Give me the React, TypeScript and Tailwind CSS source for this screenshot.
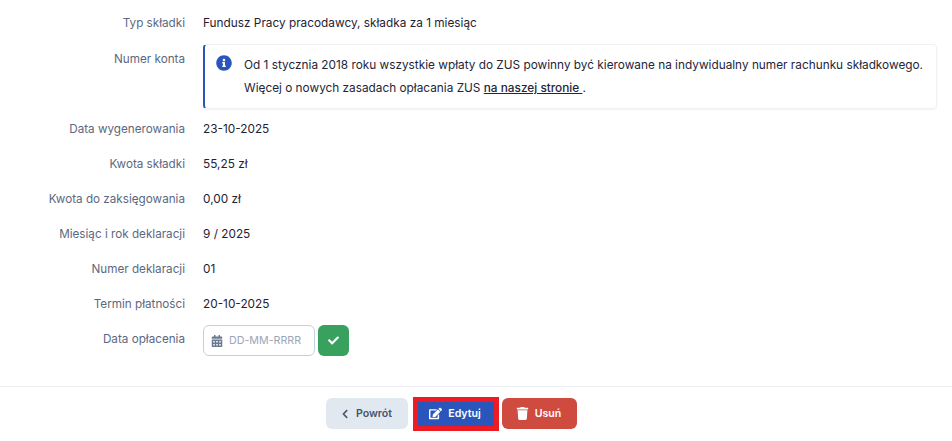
import { FaInfoCircle, FaCalendarAlt, FaCheck, FaChevronLeft, FaEdit, FaTrash } from "react-icons/fa";

const Row = ({ label, value }: { label: string; value: string }) => (
  <div className="flex h-[35px] items-center">
    <div className="w-[185px] text-right text-[#5c6880] text-[11.7px]">{label}</div>
    <div className="ml-[18px] text-[#1f2233]">{value}</div>
  </div>
);

export default function App() {
  return (
    <div className="w-[952px] h-[441px] bg-white overflow-hidden text-[11.82px] leading-[18px] font-['Inter',sans-serif] flex flex-col">
      <div className="pt-[5px] flex-1">
        <Row label="Typ składki" value="Fundusz Pracy pracodawcy, składka za 1 miesiąc" />
        <div className="flex pt-[4px] h-[71px]">
          <div className="w-[185px] text-right text-[#5c6880] text-[11.7px] pt-[6px]">Numer konta</div>
          <div className="ml-[18px] w-[734px] h-[65px] rounded-[4px] border border-[#f0f1f4] border-l-2 border-l-[#2a56bc] shadow-[0_1px_2px_rgba(0,0,0,0.05)] flex pl-[11px] pt-[9px]">
            <FaInfoCircle className="text-[#2a56bc] text-[16px] mt-[1px] shrink-0" />
            <div className="ml-[12px] text-[#23263a] leading-[23px]">
              <div>Od 1 stycznia 2018 roku wszystkie wpłaty do ZUS powinny być kierowane na indywidualny numer rachunku składkowego.</div>
              <div>Więcej o nowych zasadach opłacania ZUS <span className="underline font-medium">na naszej stronie </span> .</div>
            </div>
          </div>
        </div>
        <Row label="Data wygenerowania" value="23-10-2025" />
        <Row label="Kwota składki" value="55,25 zł" />
        <Row label="Kwota do zaksięgowania" value="0,00 zł" />
        <Row label="Miesiąc i rok deklaracji" value="9 / 2025" />
        <Row label="Numer deklaracji" value="01" />
        <Row label="Termin płatności" value="20-10-2025" />
        <div className="flex h-[35px] items-center">
          <div className="w-[185px] text-right text-[#5c6880] text-[11.7px]">Data opłacenia</div>
          <div className="ml-[18px] h-full pt-[4px] flex items-start gap-[3px]">
            <div className="w-[112px] h-[31px] rounded-[6px] border border-[#c5d0dc] flex items-center pl-[7px] gap-[6px]">
              <FaCalendarAlt className="text-[#6b7a90] text-[12px]" />
              <span className="text-[#9aa6b8] text-[10.7px]">DD-MM-RRRR</span>
            </div>
            <div className="w-[31px] h-[31px] rounded-[6px] bg-[#38a15e] flex items-center justify-center">
              <FaCheck className="text-white text-[11px]" />
            </div>
          </div>
        </div>
      </div>
      <div className="h-[55px] border-t border-[#ecedf2] flex justify-center items-center gap-[3px] pb-[1px] pr-[49px] font-semibold text-[10.6px]">
        <button className="w-[82px] h-[31px] rounded-[6px] bg-[#e2e8f0] text-[#45556c] flex items-center justify-center gap-[6px] pr-[2px]">
          <FaChevronLeft className="text-[10px]" />Powrót
        </button>
        <div className="ml-[2px] border-[5px] border-[#ed1c24]">
          <button className="w-[76px] h-[24px] bg-[#2a56bc] text-white flex items-center justify-center gap-[6px] pr-[2px]">
            <FaEdit className="text-[13px]" />Edytuj
          </button>
        </div>
        <button className="w-[75px] h-[31px] rounded-[6px] bg-[#cf4b40] text-white flex items-center justify-center gap-[6px] pr-[2px]">
          <FaTrash className="text-[13px]" />Usuń
        </button>
      </div>
    </div>
  );
}
